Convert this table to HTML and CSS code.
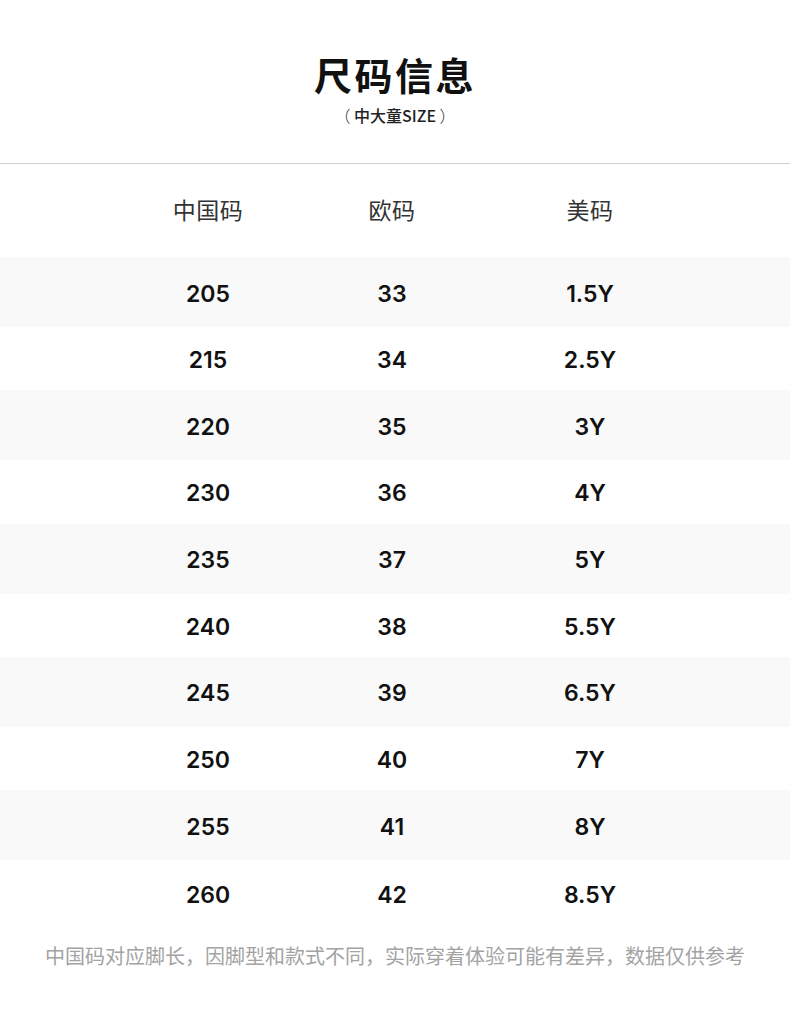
FILE: index.html
```html
<!DOCTYPE html>
<html lang="zh">
<head>
<meta charset="utf-8">
<link rel="stylesheet" href="styles.css">
</head>
<body>
<div class="page">
  <header class="head">
    <h1 class="title">尺码信息</h1>
    <p class="sub"><span class="paren">（</span> 中大童SIZE <span class="paren">）</span></p>
  </header>
  <div class="divider"></div>
  <div class="row row-head">
    <span>中国码</span><span>欧码</span><span>美码</span>
  </div>
  <div class="table">
    <div class="row odd"><span>205</span><span>33</span><span>1.5Y</span></div>
    <div class="row even"><span>215</span><span>34</span><span>2.5Y</span></div>
    <div class="row odd"><span>220</span><span>35</span><span>3Y</span></div>
    <div class="row even"><span>230</span><span>36</span><span>4Y</span></div>
    <div class="row odd"><span>235</span><span>37</span><span>5Y</span></div>
    <div class="row even"><span>240</span><span>38</span><span>5.5Y</span></div>
    <div class="row odd"><span>245</span><span>39</span><span>6.5Y</span></div>
    <div class="row even"><span>250</span><span>40</span><span>7Y</span></div>
    <div class="row odd"><span>255</span><span>41</span><span>8Y</span></div>
    <div class="row even"><span>260</span><span>42</span><span>8.5Y</span></div>
  </div>
  <p class="note">中国码对应脚长，因脚型和款式不同，实际穿着体验可能有差异，数据仅供参考</p>
</div>
</body>
</html>
```
FILE: styles.css
```css
* { box-sizing: border-box; }
html, body { margin: 0; padding: 0; background: #fff; }
body {
  font-family: "Noto Sans CJK SC", "Noto Sans", sans-serif;
  color: #111;
}
.page { width: 790px; }
.head {
  height: 163px;
  display: flex;
  flex-direction: column;
  align-items: center;
  padding-top: 49px;
}
.title {
  margin: 0;
  font-size: 38px;
  line-height: 50px;
  font-weight: 700;
  letter-spacing: 2.5px;
  color: #111;
}
.sub {
  margin: 5px 0 0;
  font-size: 16px;
  line-height: 22px;
  font-weight: 500;
  color: #222;
  white-space: pre;
}
.paren {
  font-weight: 300;
  color: #333;
}
.divider { height: 1px; background: #cfcfcf; }
.row {
  display: grid;
  grid-template-columns: 184px 184px 212px;
  padding-left: 116px;
  align-items: center;
  text-align: center;
}
.row-head {
  height: 93px;
  font-size: 23px;
  font-weight: 400;
  color: #333;
  letter-spacing: 0.5px;
  padding-bottom: 3px;
}
.table .row {
  font-family: Inter, "Open Sans", sans-serif;
  font-weight: 600;
  font-size: 23px;
  color: #111;
  padding-top: 3px;
}
.row.odd { height: 70px; background: #f9f9f9; }
.row.even { height: 63.33px; background: #fff; }
.table .row:last-child { height: 67px; }
.note {
  margin: 14px 0 0;
  text-align: center;
  font-size: 20px;
  line-height: 30px;
  color: #a3a3a3;
  font-weight: 400;
}
```
